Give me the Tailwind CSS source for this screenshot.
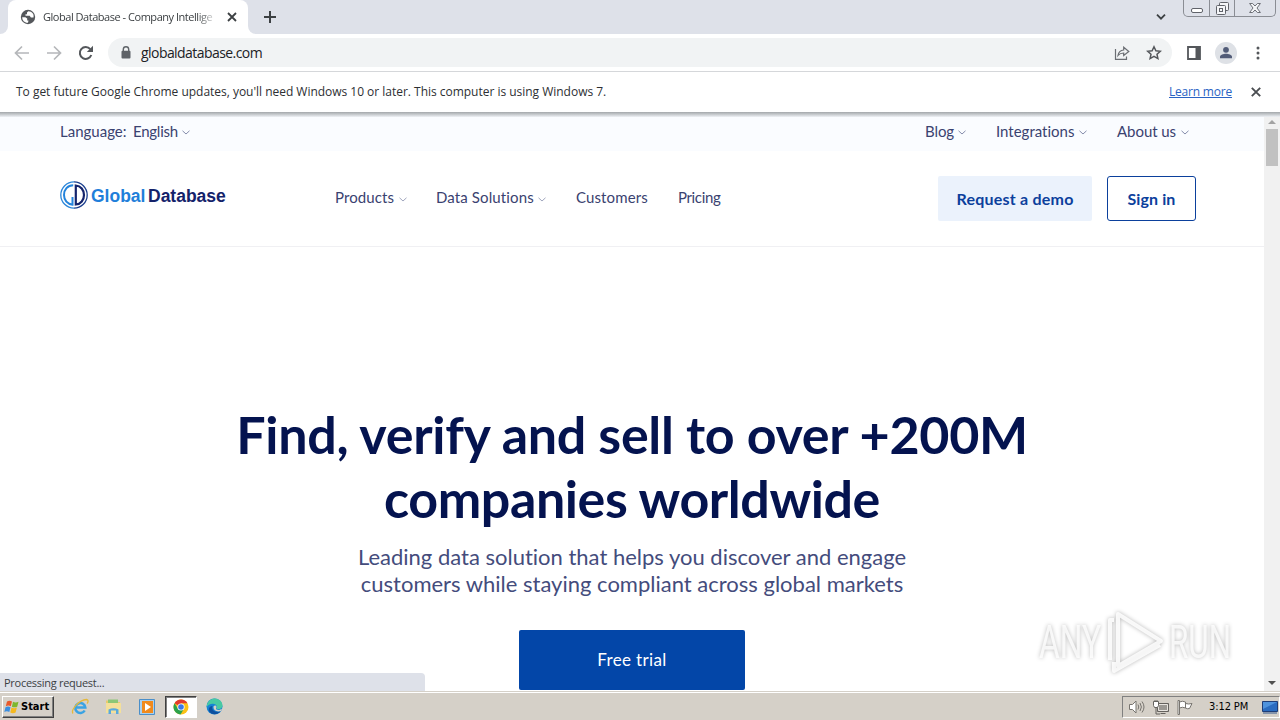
<!doctype html>
<html lang="en">

<head>
    <meta charset="UTF-8" />
    <meta name="viewport" content="width=device-width, initial-scale=1.0" />
    <title>Global Database - Company Intelligence</title>
    <script src="https://cdn.jsdelivr.net/npm/@tailwindcss/browser@4"></script>
</head>

<body class="w-[1280px] h-[720px] overflow-hidden bg-white font-['Lato',sans-serif] [font-variant-ligatures:none]">
    <div class="flex flex-col h-full">

        <!-- tab strip -->
        <div class="h-[34px] shrink-0 bg-[#dee1e9] flex items-start pl-2">
            <div class="w-[240px] h-[34px] bg-white rounded-t-lg flex items-center pl-3 relative">
                <div class="absolute -left-2 bottom-0 size-2 bg-white"><div class="size-2 bg-[#dee1e9] rounded-br-lg"></div></div>
                <div class="absolute -right-2 bottom-0 size-2 bg-white"><div class="size-2 bg-[#dee1e9] rounded-bl-lg"></div></div>
                <svg class="size-4 shrink-0" viewBox="0 0 16 16"><circle cx="8" cy="8" r="7.200" fill="#54575b" /><path d="M2.200 8.300h3.200l1.800 1.300v2h1.300l-.5 2.200C4.500 14 2.200 11.500 2.200 8.300zM8.300 2.200L7 3.600v1.600H5.500v1.600h4.200l1.200 1.600h2.600C14.300 5 12.200 2.500 8.300 2.200z" fill="#fff" /></svg>
                <div class="ml-[7px] w-[175px] h-5 leading-5 whitespace-nowrap font-['Open_Sans',sans-serif] text-[11px] tracking-[-0.47px] text-[#3c4043] mask-r-from-88%">Global Database - Company Intellige</div>
                <svg class="ml-[9px] size-[10px] shrink-0" viewBox="0 0 10 10"><path d="M1 1l8 8M9 1l-8 8" stroke="#3c4043" stroke-width="1.800" /></svg>
            </div>
            <svg class="ml-4 mt-[11px] size-3" viewBox="0 0 12 12"><path d="M6 0v12M0 6h12" stroke="#3c4043" stroke-width="2" /></svg>
            <svg class="ml-auto mt-[14px] w-[10px] h-[6px]" viewBox="0 0 10 6"><path d="M1 .7l4 4 4-4" fill="none" stroke="#3c4043" stroke-width="1.800" /></svg>
            <div class="ml-[17px] mr-1 w-[93px] h-[17px] border border-t-0 border-[#8a8d94] rounded-b-[5px] flex">
                <div class="w-[25px] flex justify-center pt-[8px]"><div class="w-3 h-[5px] border border-[#60636a] rounded-[2px] bg-white"></div></div>
                <div class="w-[26px] border-x border-[#8a8d94] flex justify-center pt-[2px]">
                    <svg class="w-[13px] h-[13px]" viewBox="0 0 13 13" fill="#f4f5f8" stroke="#60636a"><rect x="3.500" y=".5" width="9" height="8" rx="1" /><rect x=".5" y="3.500" width="9" height="9" rx="1" /><rect x="3.500" y="6.500" width="3" height="3" /></svg>
                </div>
                <div class="grow flex justify-center pt-[3px]">
                    <svg class="w-3 h-[10px]" viewBox="0 0 12 10"><path d="M.6.5h3L6 3l2.400-2.500h3L8 5l3.400 4.500h-3L6 7 3.600 9.500h-3L4 5z" fill="#f4f5f8" stroke="#60636a" stroke-width=".9" /></svg>
                </div>
            </div>
        </div>

        <!-- toolbar -->
        <div class="h-[38px] shrink-0 border-b border-[#d5d7da] flex items-center pl-[14px] pr-3">
            <svg class="size-4" viewBox="0 0 16 16" fill="none" stroke="#b5b7ba" stroke-width="1.700"><path d="M15 8H2M8 1.500L1.500 8 8 14.500" /></svg>
            <svg class="ml-4 size-4" viewBox="0 0 16 16" fill="none" stroke="#b5b7ba" stroke-width="1.700"><path d="M1 8h13M8 1.500L14.500 8 8 14.500" /></svg>
            <svg class="ml-4 size-4" viewBox="0 0 16 16"><path d="M13.300 10A5.900 5.900 0 1 1 12.300 4.200" fill="none" stroke="#54575b" stroke-width="2" /><path d="M15 .8v6.200H8.800z" fill="#54575b" /></svg>
            <div class="ml-[14px] w-[1064px] h-[29px] rounded-full bg-[#f1f3f4] flex items-center pl-[13px]">
                <svg class="w-[10px] h-[13px]" viewBox="0 0 10 13"><path d="M2.300 5V3.500a2.700 2.700 0 0 1 5.400 0V5" fill="none" stroke="#5f6368" stroke-width="1.400" /><rect x=".5" y="4.700" width="9" height="7.800" rx="1" fill="#5f6368" /></svg>
                <span class="ml-[10px] font-['Open_Sans',sans-serif] text-[14px] tracking-[-0.56px] text-[#202124] leading-5 whitespace-nowrap">globaldatabase.com</span>
                <svg class="ml-auto w-4 h-[14px]" viewBox="0 0 16 14" fill="none" stroke="#6b6e73" stroke-width="1.200"><path d="M1.500 3v10.300h11V10.500M4 9.500C4.500 6 6.500 4.200 9.700 4V1.200L14.800 5.500 9.700 9.500V7C7 7 5.200 8 4 9.500z" /></svg>
                <svg class="ml-4 mr-[10px] size-4" viewBox="0 0 16 16" fill="none" stroke="#54575b" stroke-width="1.500"><path d="M8 1.800l1.900 4 4.400.5-3.300 3 .9 4.300L8 11.400l-3.900 2.200.9-4.300-3.300-3 4.400-.5z" /></svg>
            </div>
            <svg class="ml-[15px] w-[14px] h-[14px]" viewBox="0 0 14 14"><path d="M1 1h12v12H1z" fill="none" stroke="#54575b" stroke-width="1.800" /><path d="M8.500 1H13v12H8.500z" fill="#54575b" /></svg>
            <svg class="ml-[14px] size-[22px]" viewBox="0 0 22 22"><circle cx="11" cy="11" r="11" fill="#dee1e6" /><circle cx="11" cy="7.800" r="2.900" fill="#525c78" /><path d="M5 16.300v-1.500c0-2 3.500-3 6-3s6 1 6 3v1.500z" fill="#525c78" /></svg>
            <svg class="ml-[19px] w-1 h-[14px]" viewBox="0 0 4 14" fill="#54575b"><circle cx="2" cy="2" r="1.500" /><circle cx="2" cy="7" r="1.500" /><circle cx="2" cy="12" r="1.500" /></svg>
        </div>

        <!-- info bar -->
        <div class="h-10 shrink-0 flex items-center px-4 font-['Open_Sans',sans-serif] text-[12px] text-[#2d2f33] whitespace-nowrap">
            <span class="tracking-[-0.02px]">To get future Google Chrome updates, you'll need Windows 10 or later. This computer is using Windows 7.</span>
            <a class="ml-auto w-[63px] underline text-[#2a63c4]"><span class="tracking-[-0.2px]">Learn more</span></a>
            <svg class="ml-[19px] mr-[3px] size-[10px]" viewBox="0 0 10 10"><path d="M.8.8l8.400 8.400M9.200.8L.8 9.200" stroke="#4a4d51" stroke-width="1.900" /></svg>
        </div>
        <div class="h-[5px] shrink-0 bg-linear-to-b from-[#a3a7aa] to-[#eef1f5]"></div>

        <!-- page -->
        <div class="h-[575px] shrink-0 flex relative">
            <div class="w-[1264px] text-[#3a4270]">
                <div class="h-[34px] bg-[#fafcff] flex items-center pl-[60px] pr-[75px] pb-[6px] text-[15px] whitespace-nowrap">
                    <span class="w-[73px]">Language:</span>
                    <span class="w-[49px] tracking-[-0.25px]">English</span>
                    <svg class="mt-0.5 w-2 h-[5px]" viewBox="0 0 8 5" fill="none" stroke="#858cab"><path d="M.5.800L4 4l3.500-3.200" /></svg>
                    <span class="ml-auto w-[33px] tracking-[-0.1px]">Blog</span>
                    <svg class="mt-0.5 w-2 h-[5px]" viewBox="0 0 8 5" fill="none" stroke="#858cab"><path d="M.5.800L4 4l3.500-3.200" /></svg>
                    <span class="ml-[30px] w-[83px]">Integrations</span>
                    <svg class="mt-0.5 w-2 h-[5px]" viewBox="0 0 8 5" fill="none" stroke="#858cab"><path d="M.5.800L4 4l3.500-3.200" /></svg>
                    <span class="ml-[30px] w-[64px] tracking-[-0.05px]">About us</span>
                    <svg class="mt-0.5 w-2 h-[5px]" viewBox="0 0 8 5" fill="none" stroke="#858cab"><path d="M.5.800L4 4l3.500-3.200" /></svg>
                </div>

                <div class="h-[96px] border-b border-[#f0f0f3] flex items-center pl-[60px] pr-[68px] text-[15px] whitespace-nowrap">
                    <div class="w-[275px] flex items-center pb-[7px]">
                        <svg class="size-7" viewBox="0 0 28 28" fill="none"><path d="M14 .8a13.200 13.200 0 0 0 0 26.400" stroke="#2b86d9" stroke-width="1.300" /><path d="M14 .8a13.200 13.200 0 0 1 0 26.400" stroke="#1b3f8f" stroke-width="1.300" /><path d="M13.200 4.300C7.500 4.300 4 8.700 4 14s3.500 9.200 8.500 9.700V16" stroke="#2484dc" stroke-width="2" /><path d="M15.800 4.500v19c5-.3 8.200-4.700 8.200-9.500s-3.200-9.200-8.200-9.500z" stroke="#14246c" stroke-width="2.200" /></svg>
                        <span class="ml-[3px] mt-0.5 w-[57px] font-['Liberation_Sans',sans-serif] font-bold text-[17.500px] text-[#1f7fda]">Global</span>
                        <span class="mt-0.5 font-['Liberation_Sans',sans-serif] font-bold text-[17.500px] text-[#14226a]">Database</span>
                    </div>
                    <span class="mb-0.5 w-[64px] tracking-[0.1px]">Products</span>
                    <svg class="mt-0.5 w-2 h-[5px]" viewBox="0 0 8 5" fill="none" stroke="#a0a6be"><path d="M.5.800L4 4l3.500-3.200" /></svg>
                    <span class="mb-0.5 ml-[29px] w-[102px] tracking-[0.12px]">Data Solutions</span>
                    <svg class="mt-0.5 w-2 h-[5px]" viewBox="0 0 8 5" fill="none" stroke="#a0a6be"><path d="M.5.800L4 4l3.500-3.200" /></svg>
                    <span class="mb-0.5 ml-[30px] w-[102px] tracking-[0.12px]">Customers</span>
                    <span class="mb-0.5 tracking-[-0.35px]">Pricing</span>
                    <div class="ml-auto w-[154px] h-[45px] bg-[#ebf2fc] rounded-xs flex items-center justify-center font-bold text-[16px] tracking-[0.22px] text-[#0b409c]">Request a demo</div>
                    <div class="ml-[15px] w-[89px] h-[45px] border border-[#0b409c] rounded-[3px] flex items-center justify-center font-bold text-[16px] tracking-[0.1px] text-[#0b409c]">Sign in</div>
                </div>

                <div class="pt-[155px] flex flex-col items-center whitespace-nowrap">
                    <h1 class="text-[52px] leading-[64px] font-bold tracking-[-0.3px] text-[#04134f] text-center">Find, verify and sell to over +200M<br><span class="tracking-[-0.42px]">companies worldwide</span></h1>
                    <p class="mt-[13px] text-[22px] leading-[27px] text-[#444c7c] text-center">Leading data solution that helps you discover and engage<br>customers while staying compliant across global markets</p>
                    <div class="mt-[33px] w-[226px] h-[60px] bg-[#0346a8] rounded-xs flex items-center justify-center text-white text-[17px] tracking-[0.35px]">Free trial</div>
                </div>
            </div>

            <!-- scrollbar -->
            <div class="w-4 bg-[#f1f1f1] flex flex-col items-center">
                <svg class="mt-[3px] w-2 h-1" viewBox="0 0 8 4"><path d="M0 4l4-4 4 4z" fill="#a3a3a3" /></svg>
                <div class="mt-[5px] w-3 h-[37px] bg-[#c1c1c1]"></div>
                <svg class="mt-auto mb-[7px] w-2 h-1" viewBox="0 0 8 4"><path d="M0 0l4 4 4-4z" fill="#505050" /></svg>
            </div>

            <!-- status bubble -->
            <div class="absolute left-0 bottom-0 w-[425px] h-[19px] bg-[#dee1e9] rounded-tr-[4px] pl-1 leading-[20px] font-['Open_Sans',sans-serif] text-[11px] tracking-[-0.28px] text-[#3c4043]">Processing request...</div>

            <!-- watermark -->
            <svg class="absolute left-[1034px] top-[488px] w-[206px] h-[76px] drop-shadow-[0_0_2px_#0005]" viewBox="0 0 206 76" fill="#fff">
                <g font-family="Roboto, sans-serif" font-size="46" fill-opacity=".8">
                    <text x="5" y="53" textLength="62" lengthAdjust="spacingAndGlyphs">ANY</text>
                    <text x="135" y="53" textLength="62" lengthAdjust="spacingAndGlyphs">RUN</text>
                </g>
                <path d="M84 9L127 36 84 61zM80 15h-4v40M80 57v9l46-26" fill="none" stroke="#fff" stroke-opacity=".85" stroke-width="4" stroke-linejoin="round" />
            </svg>
        </div>

        <!-- taskbar -->
        <div class="h-7 grow bg-[#d5d0c8] border-t border-white shadow-[0_-1px_0_#d5d0c8] relative flex items-center">
            <div class="ml-0.5 mt-px w-[52px] h-[22px] bg-[#d5d0c8] border border-t-white border-l-white border-r-[#404040] border-b-[#404040] shadow-[inset_-1px_-1px_0_#808080] flex items-center pl-px">
                <svg class="size-4" viewBox="0 0 16 16"><path d="M3 2.500q2.500-1.500 5 0L6.800 7.300q-2.500-1.500-5 0z" fill="#e8592b" /><path d="M9 2.800q2.500 1.300 5.500 0l-1.300 4.900q-2.700 1.300-5.300 0z" fill="#7db72f" /><path d="M1.500 8.300q2.500-1.500 5 0L5.300 13q-2.500-1.500-5 0z" fill="#3a8ee0" /><path d="M7.500 8.600q2.600 1.300 5.400 0l-1.300 4.900q-2.700 1.300-5.300 0z" fill="#f5b91f" /></svg>
                <span class="ml-px font-['DejaVu_Sans_Condensed','DejaVu_Sans',sans-serif] font-bold text-[11px] text-black">Start</span>
            </div>
            <svg class="ml-[17px] size-[18px]" viewBox="0 0 18 18" fill="none"><path d="M13.700 12.500a5 5 0 1 1 .6-3H5" stroke="#3aa3e3" stroke-width="2.500" /><path d="M2 15.500C-.5 12 8 2 15.500 1.500c2.500.3 1.500 3 .5 4" stroke="#e5b83a" stroke-width="1.300" /></svg>
            <svg class="ml-4 w-[17px] h-[17px]" viewBox="0 0 17 17"><path d="M1 2.500h5l1 1.500h8v11H1z" fill="#e9cb6b" /><path d="M3 1.500h10v4H3z" fill="#8cc776" /><path d="M1 5h15v10H1z" fill="#f4e09a" /><path d="M3.500 16v-4.500q5-2.500 10 0V16h-2.500v-3.500h-5V16z" fill="#5aa9dd" /></svg>
            <svg class="ml-[17px] size-4" viewBox="0 0 16 16"><path d="M.5.5h15v15H.5z" fill="#a8d0ef" stroke="#4b8fc9" /><path d="M3 2h11v12H3z" fill="#f08a1d" /><path d="M6 4l6 4-6 4z" fill="#fff" /></svg>
            <div class="ml-[10px] w-8 h-[22px] bg-white border border-t-[#404040] border-l-[#404040] border-r-white border-b-white shadow-[inset_1px_1px_0_#808080] flex items-center justify-center">
                <svg class="size-4" viewBox="0 0 16 16"><circle cx="8" cy="8" r="7.500" fill="#fbc116" /><path d="M8 8L1.500 4.200A7.500 7.500 0 0 1 14.500 4.200H8z" fill="#e33b2e" /><path d="M1.500 4.200A7.500 7.500 0 0 0 7.500 15.500L11 9.700 5 9.700z" fill="#2ba24c" /><circle cx="8" cy="8" r="3.600" fill="#fff" /><circle cx="8" cy="8" r="2.800" fill="#3b78e7" /></svg>
            </div>
            <svg class="ml-[9px] size-[17px]" viewBox="0 0 17 17"><circle cx="8.500" cy="8.500" r="8" fill="#1583d5" /><path d="M1 6.500C2.500 2 6 .5 9 .5c4.500.2 7.500 3.500 7.500 7 0 3-3 4.500-6 3.500 1.500-2.500-.5-5-3.500-5.200C4 5.700 2 7 .7 9z" fill="#48c9a3" /><path d="M6.500 8c-1.500 4 2 7 8 5.300-3 4-9 4-11.500 0C2 10.500 4 8 6.500 8z" fill="#0d4f9e" /><path d="M7.500 8.500c1-1.500 3-1 3 .5 0 1-.8 1.500-.3 2.300 1.500 1.200 4 .8 6-.8l-1 2.500c-5 1.500-8-1-7.700-4.500z" fill="#d5d0c8" /></svg>

            <!-- tray -->
            <div class="ml-auto mt-px w-[158px] h-[22px] border border-t-[#808080] border-l-[#808080] border-r-white border-b-white flex items-center pl-[6px] pr-px">
                <svg class="w-4 h-[14px]" viewBox="0 0 16 14" fill="none" stroke="#77746f"><path d="M.5 4.500h3L7 1v12L3.500 9.500h-3z" fill="#fff" /><path d="M9 4.500q1.500 2.500 0 5M11 3q2.800 4 0 8M13 1.500q4 5.500 0 11" /></svg>
                <svg class="ml-2 w-4 h-[15px]" viewBox="0 0 16 15" stroke="#65625e"><path d="M4.500 3.500h11v8h-11z" fill="#9b9893" /><path d="M5.500 4.500h9v6h-9z" fill="none" stroke="#e8e5e0" /><path d="M7.500 13.500h5M3 8v6h4" fill="none" /><path d="M.5 1.500h5v4l-1 2h-3l-1-2zM2 0v2M4 0v2" fill="#fff" /></svg>
                <svg class="ml-2 w-[17px] h-[15px]" viewBox="0 0 17 15" fill="#fff" stroke="#77746f"><path d="M1 .5h1.500V14.500H1zM2.500 2q3-1.500 6 0v6q-3-1.500-6 0zM8.500 3.500q3 1 6.500 0l-2.500 5q-2 .7-4-.5z" /></svg>
                <span class="ml-[15px] w-[42px] whitespace-nowrap font-['DejaVu_Sans_Condensed','DejaVu_Sans',sans-serif] text-[11px] tracking-[-0.1px] text-black">3:12 PM</span>
                <svg class="ml-auto w-4 h-[13px]" viewBox="0 0 16 13"><path d="M.5.5h15v10H.5z" fill="#2b6cc0" stroke="#1f3e78" /><path d="M1 1h14L1 8z" fill="#4f93dd" /><path d="M1 12h14" stroke="#35588e" /></svg>
            </div>
        </div>
    </div>
</body>

</html>
